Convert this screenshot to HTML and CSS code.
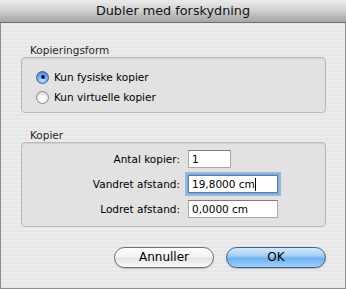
FILE: index.html
```html
<!DOCTYPE html>
<html lang="da">
<head>
    <meta charset="UTF-8">
    <title>Dubler med forskydning</title>
    <link rel="stylesheet" href="styles.css">
</head>
<body>
    <div class="window">
        <div class="titlebar">Dubler med forskydning</div>

        <div class="content">
            <div class="group-label">Kopieringsform</div>
            <div class="group radios">
                <label class="radio-row"><span class="radio checked"></span>Kun fysiske kopier</label>
                <label class="radio-row"><span class="radio"></span>Kun virtuelle kopier</label>
            </div>

            <div class="group-label second">Kopier</div>
            <div class="group fields">
                <span class="field-label">Antal kopier:</span>
                <span class="field short">1</span>
                <span class="field-label">Vandret afstand:</span>
                <span class="field focused">19,8000 cm<span class="caret"></span></span>
                <span class="field-label">Lodret afstand:</span>
                <span class="field">0,0000 cm</span>
            </div>

            <div class="buttons">
                <button class="btn">Annuller</button>
                <button class="btn default">OK</button>
            </div>
        </div>
    </div>
</body>
</html>
```

FILE: styles.css
```css
/* Dialog window */
body {
    margin: 0;
    padding: 0;
    font-family: "DejaVu Sans", "Noto Sans", sans-serif;
    font-size: 10.5px;
    color: #000;
}

.window {
    width: 346px;
    height: 289px;
    box-sizing: border-box;
    border: 1px solid #8d8d8d;
    border-top: none;
    background: repeating-linear-gradient(180deg, #ececec 0, #ececec 2px, #e7e7e7 2px, #e7e7e7 4px);
    display: flex;
    flex-direction: column;
}

.titlebar {
    height: 22px;
    line-height: 22px;
    margin: 0 -1px;
    border-bottom: 1px solid #6f6f6f;
    background: linear-gradient(180deg, #ececec 0%, #d6d6d6 40%, #b8b8b8 75%, #a6a6a6 100%);
    text-align: center;
    font-size: 12.8px;
    color: #111;
}

.content {
    padding: 0 19px 0 20px;
    display: flex;
    flex-direction: column;
}

/* Group boxes */
.group-label {
    margin: 21px 0 0 9px;
    line-height: 13px;
    height: 13px;
    color: #2a1f2a;
}

.group-label.second {
    margin-top: 16px;
}

.group {
    border: 1px solid #b9b9b9;
    border-radius: 4px;
    background: #e2e2e2;
    box-shadow: inset 0 1px 1px rgba(0, 0, 0, 0.08);
}

.radios {
    padding: 9px 0 0 14px;
    box-sizing: border-box;
    height: 56px;
}

.radio-row {
    display: flex;
    align-items: center;
    height: 20px;
    gap: 5px;
}

.radio {
    width: 13px;
    height: 13px;
    border-radius: 50%;
    border: 1px solid #8a8a8a;
    background: radial-gradient(circle at 50% 70%, #ffffff 0%, #f2f2f2 45%, #c8c8c8 100%);
    box-sizing: border-box;
    position: relative;
}

.radio.checked {
    border-color: #3d5f95;
    background: radial-gradient(circle at 50% 75%, #c6e3ff 0%, #72acf0 50%, #3c78cc 100%);
}

.radio.checked::after {
    content: "";
    position: absolute;
    left: 3.5px;
    top: 3.5px;
    width: 4px;
    height: 4px;
    border-radius: 50%;
    background: #101a30;
}

/* Field grid */
.fields {
    display: grid;
    grid-template-columns: 158px auto;
    column-gap: 8px;
    row-gap: 7px;
    padding: 7px 0 8px 0;
    align-items: center;
}

.field-label {
    text-align: right;
}

.field {
    height: 18px;
    width: 90px;
    box-sizing: border-box;
    border: 1px solid #a9a9a9;
    border-top-color: #7c7c7c;
    background: #fff;
    padding-left: 3px;
    line-height: 16px;
    display: flex;
    align-items: center;
}

.field.short {
    width: 43px;
}

.field.focused {
    box-shadow: 0 0 0 1px #7aa6dc, 0 0 0 3px rgba(96, 146, 214, 0.55);
    border-color: #5c7fb3;
}

.caret {
    display: inline-block;
    width: 1px;
    height: 13px;
    background: #000;
}

/* Buttons */
.buttons {
    display: flex;
    justify-content: flex-end;
    gap: 12px;
    margin-top: 20px;
}

.btn {
    width: 100px;
    height: 21px;
    border-radius: 11px;
    border: 1px solid #6e6e6e;
    background: linear-gradient(180deg, #ffffff 0%, #f4f4f4 45%, #e4e4e4 55%, #fbfbfb 100%);
    font-family: "DejaVu Sans", "Noto Sans", sans-serif;
    font-size: 12px;
    line-height: 19px;
    color: #000;
    padding: 0;
    box-shadow: 0 1px 1px rgba(0, 0, 0, 0.2);
}

.btn.default {
    border-color: #3f5f8f;
    background: linear-gradient(180deg, #d3e8fb 0%, #a6cff4 40%, #6fb0ef 55%, #9fd0fb 100%);
}
```
